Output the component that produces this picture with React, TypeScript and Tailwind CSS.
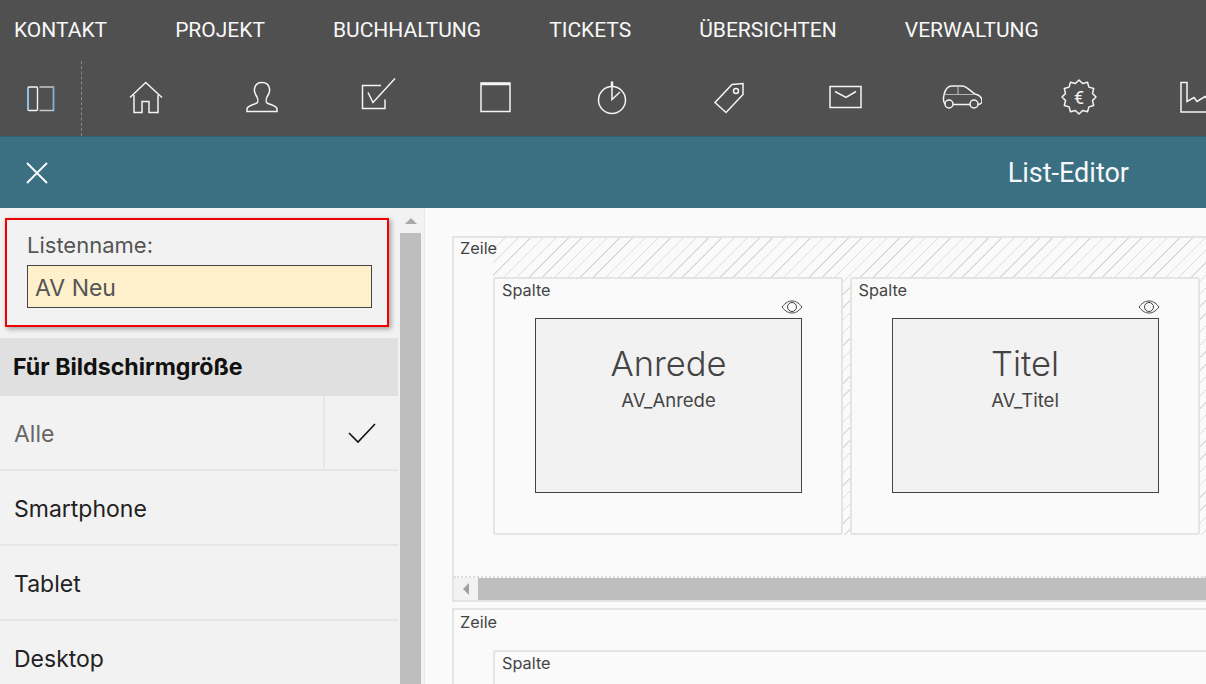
import React from 'react';

const MENU = ['KONTAKT', 'PROJEKT', 'BUCHHALTUNG', 'TICKETS', 'ÜBERSICHTEN', 'VERWALTUNG'];

const badgePoints = Array.from({ length: 24 }, (_, i) => {
  const r = i % 2 === 0 ? 17 : 14;
  const a = (i * Math.PI) / 12 - Math.PI / 2;
  return `${(20 + r * Math.cos(a)).toFixed(1)},${(19 + r * Math.sin(a)).toFixed(1)}`;
}).join(' ');

const Icon: React.FC<{ children: React.ReactNode }> = ({ children }) => (
  <div className="w-[116.7px] shrink-0 flex items-center justify-center">
    <svg width="40" height="40" viewBox="0 0 40 40" fill="none" stroke="#f4f4f4" strokeWidth="1.5">
      {children}
    </svg>
  </div>
);

const Eye = () => (
  <svg width="22" height="14" viewBox="0 0 22 14" fill="none" stroke="#444" strokeWidth="1">
    <path d="M1 7 C5 2 8 1 11 1 C14 1 17 2 21 7 C17 12 14 13 11 13 C8 13 5 12 1 7 Z" />
    <circle cx="11" cy="7" r="4.5" />
  </svg>
);

const Column: React.FC<{ title: string; field: string }> = ({ title, field }) => (
  <div className="relative w-[350px] h-[258px] shrink-0 bg-[#fafafa] border-2 border-[#e4e4e4] rounded-[3px] pt-[39px] pl-[40px]">
    <span className="absolute left-[7px] top-[-1px] text-[16.3px] text-[#444]">Spalte</span>
    <div className="absolute left-[286px] top-[21px] flex">
      <Eye />
    </div>
    <div className="w-[267px] h-[175px] bg-[#f2f2f2] border border-[#444] flex flex-col items-center pt-[21px]">
      <span className="text-[34.5px] font-light leading-[48px] text-[#444]">{title}</span>
      <span className="text-[18.5px] leading-[24px] text-[#444]">{field}</span>
    </div>
  </div>
);

const OptionRow: React.FC<{ label: string; checked?: boolean }> = ({ label, checked }) => (
  <div className="h-[75px] shrink-0 flex border-b-2 border-[#e6e6e6]">
    <div className={`flex-1 flex items-center pl-[14px] pt-[3px] text-[23px] ${checked ? 'text-[#666]' : 'text-[#222]'}`}>
      {label}
    </div>
    {checked && (
      <div className="w-[75px] border-l-2 border-[#e6e6e6] flex items-center justify-center pt-[1px]">
        <svg width="30" height="22" viewBox="0 0 30 22" fill="none" stroke="#111" strokeWidth="1.6">
          <path d="M2 11 L11 20 L28 2" />
        </svg>
      </div>
    )}
  </div>
);

export default function App() {
  return (
    <div className="w-full h-screen overflow-hidden flex flex-col bg-[#fafafa] font-['Inter',sans-serif]">
      <header className="h-[136px] shrink-0 bg-[#505050] flex flex-col text-white font-['Roboto',sans-serif]">
        <nav className="h-[61px] shrink-0 flex items-center gap-[68px] pl-[14px] pt-[1px] text-[21px] text-[#f8f8f8]">
          {MENU.map(item => (
            <span key={item}>{item}</span>
          ))}
        </nav>
        <div className="flex-1 flex overflow-hidden">
          <div className="w-[82px] shrink-0 border-r border-dashed border-[#888] flex items-center justify-center pl-[1px] pt-[1px]">
            <svg width="28" height="26" viewBox="0 0 28 26" fill="none" strokeWidth="1.4">
              <rect x="1" y="1" width="9.5" height="23.5" rx="1" stroke="#eef6fc" />
              <path d="M1 2 V23.5" stroke="#7cc0f0" />
              <path d="M12.5 1 H26.5 V24.5 H12.5" stroke="#c8c8c8" />
              <path d="M26.5 1 V24.5" stroke="#6fb5e8" />
            </svg>
          </div>
          <div className="flex ml-[5px] pb-[2px]">
            <Icon>
              <path d="M5 19.5 L20.7 4.5 L37 19.5" />
              <path d="M9 17 V34.5 H17 V23.5 H24 V34.5 H33 V17" />
            </Icon>
            <Icon>
              <path d="M5 33.5 H35 V31 C35 28 29 27 25 25 C24 24 24 21 25 19 C27 16 28 13 27.5 11 C27 7 24 4.5 20 4.5 C16 4.5 13 7 12.5 11 C12 13 13 16 15 19 C16 21 16 24 15 25 C11 27 5 28 5 31 Z" />
            </Icon>
            <Icon>
              <path d="M22 7.5 H3.5 V30.5 H26 V21.5" />
              <path d="M9 14.5 L14 24.5 L36 0.5" />
            </Icon>
            <Icon>
              <rect x="6" y="5" width="29" height="28.5" />
              <path d="M6 6 H35" strokeWidth="2.5" />
            </Icon>
            <Icon>
              <circle cx="20" cy="22" r="13.5" />
              <path d="M20 4 V21.5 L28 14" />
              <path d="M20 3.5 V8" strokeWidth="2.5" />
            </Icon>
            <Icon>
              <path d="M6 24.5 L17 34.5 L34 16.5 V5.5 L23 6.5 Z" />
              <circle cx="27" cy="13" r="2.5" />
            </Icon>
            <Icon>
              <rect x="5" y="8.5" width="31" height="21" />
              <path d="M10 13.5 L21 19.5 L31 13.5" />
            </Icon>
            <Icon>
              <path d="M3 26 C1.5 24 1 21 2 17 C3 12 5 8 10 8 H20 C25 8 29 14 33 16 C37 17 40 19 40 23 C40 25 38 26.5 36 26.5 M11 26.5 H28" />
              <path d="M2.5 16.5 H33 M16 8 V16.5" stroke="#b4b4b4" strokeWidth="1.2" />
              <circle cx="7" cy="26" r="4" />
              <circle cx="32" cy="26" r="4" />
            </Icon>
            <Icon>
              <polygon points={badgePoints} strokeLinejoin="round" />
              <text x="20" y="25.5" textAnchor="middle" fontSize="18" fill="#f4f4f4" stroke="none" fontFamily="Roboto, sans-serif">€</text>
            </Icon>
            <Icon>
              <path d="M42 34 H5 V4.5 H11 V23.5 L18 19.5 L21 23.5 L29 18.5 L32 22 L42 17" />
            </Icon>
          </div>
        </div>
      </header>

      <div className="h-[72px] shrink-0 bg-[#3b7082] border-t border-[#33616f] flex items-center justify-between pl-[26px] pr-[77px]">
        <svg width="22" height="22" viewBox="0 0 22 22" fill="none" stroke="#ffffff" strokeWidth="1.8">
          <path d="M1 1 L21 21 M21 1 L1 21" />
        </svg>
        <span className="font-['Roboto',sans-serif] text-[27px] pt-[1px] text-[#f6f8f9]">List-Editor</span>
      </div>

      <div className="flex-1 min-h-0 flex">
        <aside className="w-[425px] shrink-0 bg-[#f2f2f2] border-r border-[#e8e8e8] flex">
          <div className="w-[398px] shrink-0 flex flex-col pt-[10px]">
            <div className="ml-[5px] w-[384px] h-[109px] shrink-0 border-2 border-[#f00000] shadow-[2px_2px_5px_rgba(0,0,0,0.35)] pl-[20px] pt-[11px]">
              <label className="block text-[22px] leading-[28px] text-[#555]">Listenname:</label>
              <div className="mt-[6px] w-[345px] h-[43px] bg-[#fff0cc] border border-[#444] flex items-center pl-[7px] pt-[3px] text-[23px] text-[#555]">
                AV Neu
              </div>
            </div>
            <div className="mt-[11px] h-[58px] shrink-0 bg-[#e0e0e0] flex items-center pl-[13px] text-[23.2px] font-bold text-[#111]">
              Für Bildschirmgröße
            </div>
            <OptionRow label="Alle" checked />
            <OptionRow label="Smartphone" />
            <OptionRow label="Tablet" />
            <OptionRow label="Desktop" />
          </div>
          <div className="w-[21px] ml-[2px] shrink-0 flex flex-col items-center">
            <div className="h-[25px] shrink-0 flex items-center justify-center">
              <div className="w-0 h-0 border-x-[6px] border-x-transparent border-b-[6px] border-b-[#a8a8a8]" />
            </div>
            <div className="flex-1 w-full bg-[#bebebe]" />
          </div>
        </aside>

        <main className="flex-1 min-w-0 overflow-hidden pl-[27px] pt-[28px]">
          <div className="relative h-[366px] border-2 border-r-0 border-[#e4e4e4] flex flex-col">
            <span className="absolute left-[6px] top-[-2px] text-[16.3px] leading-[24px] text-[#444]">Zeile</span>
            <div className="ml-[39px] h-[297px] shrink-0 pt-[39px] flex gap-[6.5px] overflow-hidden bg-[repeating-linear-gradient(135deg,transparent,transparent_8px,#dcdcdc_8px,#dcdcdc_9px)]">
              <Column title="Anrede" field="AV_Anrede" />
              <Column title="Titel" field="AV_Titel" />
            </div>
            <div className="flex-1 border-b-2 border-dotted border-[#dcdcdc]" />
            <div className="h-[22px] shrink-0 flex bg-[#f2f2f2]">
              <div className="w-[24px] shrink-0 flex items-center justify-center">
                <div className="w-0 h-0 border-y-[6px] border-y-transparent border-r-[6px] border-r-[#a0a0a0]" />
              </div>
              <div className="flex-1 bg-[#bebebe]" />
            </div>
          </div>
          <div className="relative mt-[6px] h-[200px] border-2 border-r-0 border-[#e4e4e4] pl-[39px] pt-[40px]">
            <span className="absolute left-[6px] top-[0px] text-[16.3px] leading-[24px] text-[#444]">Zeile</span>
            <div className="relative h-[120px] border-2 border-r-0 border-[#e4e4e4] rounded-l-[3px]">
              <span className="absolute left-[7px] top-[-1px] text-[16.3px] text-[#444]">Spalte</span>
            </div>
          </div>
        </main>
      </div>
    </div>
  );
}
